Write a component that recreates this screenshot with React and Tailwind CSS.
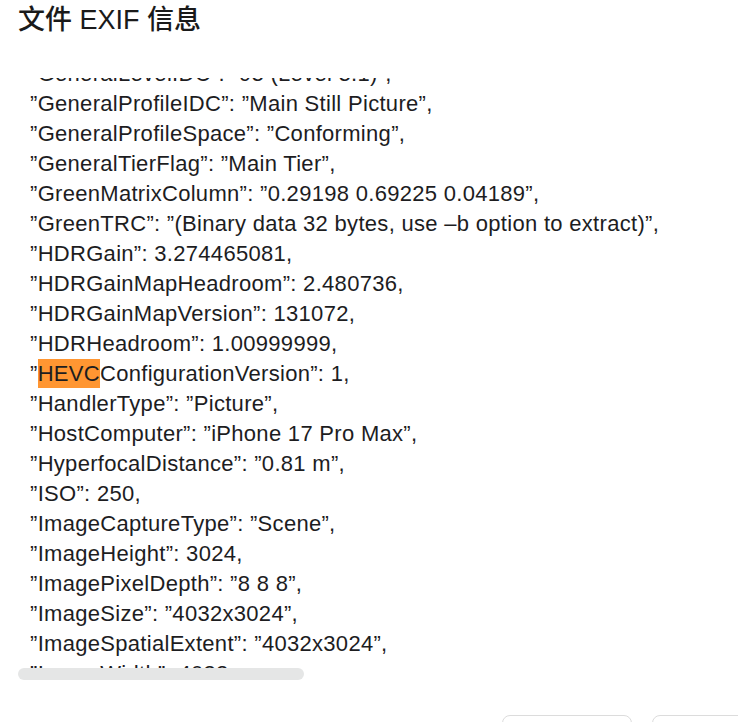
const lines = [
  '”GeneralLevelIDC”: ”93 (Level 3.1)”,',
  '”GeneralProfileIDC”: ”Main Still Picture”,',
  '”GeneralProfileSpace”: ”Conforming”,',
  '”GeneralTierFlag”: ”Main Tier”,',
  '”GreenMatrixColumn”: ”0.29198 0.69225 0.04189”,',
  '”GreenTRC”: ”(Binary data 32 bytes, use –b option to extract)”,',
  '”HDRGain”: 3.274465081,',
  '”HDRGainMapHeadroom”: 2.480736,',
  '”HDRGainMapVersion”: 131072,',
  '”HDRHeadroom”: 1.00999999,',
  null,
  '”HandlerType”: ”Picture”,',
  '”HostComputer”: ”iPhone 17 Pro Max”,',
  '”HyperfocalDistance”: ”0.81 m”,',
  '”ISO”: 250,',
  '”ImageCaptureType”: ”Scene”,',
  '”ImageHeight”: 3024,',
  '”ImagePixelDepth”: ”8 8 8”,',
  '”ImageSize”: ”4032x3024”,',
  '”ImageSpatialExtent”: ”4032x3024”,',
  '”ImageWidth”: 4032,',
];

export default function App() {
  return (
    <div
      className="h-[722px] w-[738px] overflow-hidden bg-white text-[#1d1d1f]"
      style={{ fontFamily: '"Liberation Sans", "Noto Sans CJK SC", sans-serif' }}
    >
      <h1 className="pl-[18px] pt-[3px] text-[27px] font-medium leading-[34px] text-[#1a1a1a]">
        文件 EXIF 信息
      </h1>

      <div className="ml-[18px] mt-[41px] w-[702px]">
        <div className="h-[590px] overflow-hidden">
          <div className="-mt-[19px] whitespace-pre pl-3 text-[22px] leading-[30px] tracking-[0.3px]">
            {lines.map((line, i) =>
              line === null ? (
                <div key={i}>
                  ”<span className="bg-[#ff9632] py-[2px]">HEVC</span>ConfigurationVersion”: 1,
                </div>
              ) : (
                <div key={i}>{line}</div>
              )
            )}
          </div>
        </div>
        <div className="h-3 w-[286px] rounded-md bg-[#e5e6e6]" />
      </div>

      <div className="ml-[502px] mt-[35px] flex gap-5">
        <button className="h-10 w-[130px] shrink-0 rounded-lg border border-[#dcdcdc] bg-white" />
        <button className="h-10 w-[130px] shrink-0 rounded-lg border border-[#dcdcdc] bg-white" />
      </div>
    </div>
  );
}
